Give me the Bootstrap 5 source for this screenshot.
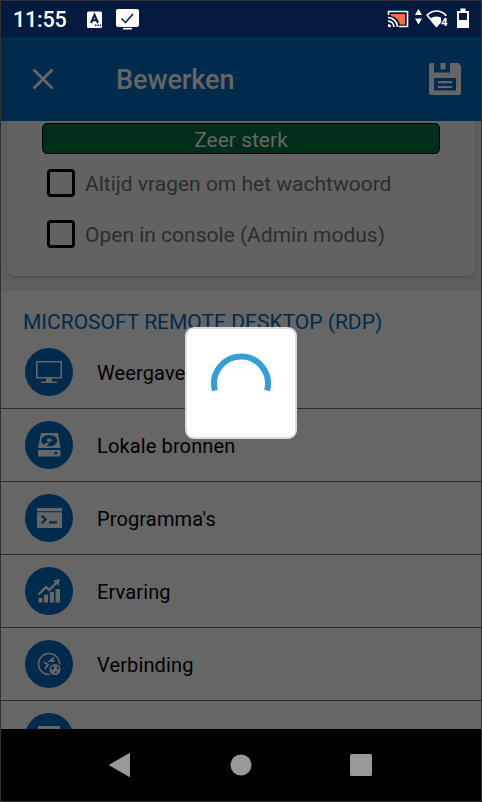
<!DOCTYPE html>
<html lang="nl">
<head>
<meta charset="utf-8">
<meta name="viewport" content="width=device-width, initial-scale=1">
<title>Bewerken</title>
<link href="https://cdn.jsdelivr.net/npm/bootstrap@5.3.0/dist/css/bootstrap.min.css" rel="stylesheet">
<style>
body{font-family:Roboto,sans-serif;background:#333;overflow:hidden}
.screen{width:482px;height:802px;border:1px solid #333;background:#666;font-size:20px;line-height:24px}
.screen svg{display:block;flex:none}
.statusbar{height:36px;background:#041b3f;padding:0 11px 0 12px}
.clock{font-size:21.5px;font-weight:500;width:74px;letter-spacing:-.2px;padding-top:2px}
.appbar{height:84px;background:#002b4d;color:#666;padding:0 20px 0 31px}
.appbar h1{font-size:27px;font-weight:500;margin:1px 0 0 62px;line-height:30px;letter-spacing:-.05px}
.content{height:608px;overflow:hidden}
.panel-area{height:170px;background:#5e5e5e;padding:0 6px}
.panel{height:155px;background:#626262;border-radius:0 0 8px 8px;box-shadow:0 1px 3px rgba(0,0,0,.22);padding:2px 35px 0}
.strength{height:31px;background:#002e18;border:1px solid #000;border-radius:5px;color:#666;font-size:21px;line-height:32px}
.opt{height:51px;color:#2d2d2d;padding-left:5px;font-size:21px}
.opt .form-check-input{width:28px;height:28px;border:3px solid #000;border-radius:4px;background:transparent;margin:0 10px 2px 0;flex:none}
.opts{padding-top:4px}
.section-title{font-size:21px;color:#002b4d;margin:0;padding:19px 0 2px 22px;line-height:24px;font-weight:400}
.entry{height:73px;border-bottom:1px solid #292929;padding-left:24px;color:#000}
.entry-label{padding-top:2px;letter-spacing:.13px}
.disc{width:48px;height:48px;border-radius:50%;background:#002b4d;margin-right:24px;flex:none}
.loader{width:112px;height:112px;left:184px;top:326px;background:#fff;border:2px solid #dcdcdc;border-radius:9px}
.sysnav{height:72px;background:#000}
</style>
</head>
<body>
<div class="screen d-flex flex-column position-relative">
  <div class="statusbar d-flex align-items-center text-white">
    <span class="clock">11:55</span>
    <svg width="60" height="36" viewBox="0 0 60 36">
      <rect y="10.500" width="15" height="16.500" rx="1.500" fill="#fff"/>
      <path d="M4 22 7.500 13.700 11 22M5.200 19.300h4.600" fill="none" stroke="#041b3f" stroke-width="2"/>
      <path d="M8 24.300h1.500M10.500 24.300H12M13 24.300h1" stroke="#041b3f" stroke-width="1.500"/>
      <rect x="29" y="8" width="23" height="18" rx="2" fill="#fff"/><path d="M36 27.700h9" stroke="#fff" stroke-width="1.600"/>
      <path d="M34.500 17.500l4 4 7.500-8.500" fill="none" stroke="#041b3f" stroke-width="1.500"/>
    </svg>
    <svg class="ms-auto" width="84" height="36" viewBox="386 1 84 36">
      <path d="M388.500 15v-3.500h19v15h-8.500" fill="none" stroke="#fff" stroke-width="1.600"/>
      <path d="M391 14h14v10.500H400C399 20 396 17 391 16z" fill="#ff6b43"/>
      <path d="M388 17.500a9.500 9.500 0 0 1 9.500 9.500M388 21a6 6 0 0 1 6 6" fill="none" stroke="#fff" stroke-width="1.700"/><path d="M388 24a3 3 0 0 1 3 3h-3z" fill="#fff"/>
      <path d="M415 15h7l-3.500-6zM415 18.500h7l-3.500 6z" fill="#fff"/>
      <path d="M427 15Q436.500 7 446 15L436.500 26.500z" fill="none" stroke="#fff" stroke-width="1.600" stroke-linejoin="round"/>
      <path d="M430 18.500q6.500-4 13 0L436.500 27z" fill="#fff"/>
      <rect x="441" y="16" width="7" height="10" fill="#041b3f"/>
      <text x="441" y="25.500" font-family="Roboto" font-weight="700" font-size="11.500" fill="#fff" textLength="6">4</text>
      <path d="M457 11h3.500V8.500h5V11h3.500v17h-12z" fill="#fff"/><path d="M459 13h8v7h-8z" fill="#041b3f"/>
    </svg>
  </div>
  <header class="appbar d-flex align-items-center">
    <svg width="22" height="22" viewBox="0 0 22 22"><path d="M1.500 1.500l19 19M20.500 1.500l-19 19" stroke="#666" stroke-width="2.700"/></svg>
    <h1>Bewerken</h1>
    <svg class="ms-auto" width="32" height="32" viewBox="0 0 32 32">
      <path fill="#666" fill-rule="evenodd" d="M2 0h3v9.500h16V0h8.500L32 3v27q0 2-2 2H2q-2 0-2-2V2q0-2 2-2zM5 15v12.500h22V15z"/>
      <path d="M11.500 0h5v6.500h-5z" fill="#666"/><path d="M9 19.200h14M9 24h14" stroke="#666" stroke-width="2.200"/>
    </svg>
  </header>
  <main class="content">
    <div class="panel-area">
      <div class="panel">
        <div class="strength text-center">Zeer sterk</div>
        <div class="opts">
          <label class="opt d-flex align-items-center"><input class="form-check-input" type="checkbox"><span>Altijd vragen om het wachtwoord</span></label>
          <label class="opt d-flex align-items-center"><input class="form-check-input" type="checkbox"><span>Open in console (Admin modus)</span></label>
        </div>
      </div>
    </div>
    <h2 class="section-title">MICROSOFT REMOTE DESKTOP (RDP)</h2>
    <div>
      <div class="entry d-flex align-items-center"><span class="disc"><svg width="48" height="48" viewBox="0 0 48 48"><path d="M11.750 13.750h24.500v16h-24.500z" fill="none" stroke="#666" stroke-width="1.500"/><path d="M21 30h6v3.500h5V35H16v-1.500h5z" fill="#666"/></svg></span><span class="entry-label">Weergave</span></div>
      <div class="entry d-flex align-items-center"><span class="disc"><svg width="48" height="48" viewBox="0 0 48 48"><path d="M16 12h17l2.500 15h-22.500zM13 29h22.500v6.500H13z" fill="#666"/><ellipse cx="24.200" cy="19.600" rx="8" ry="5.700" fill="#002b4d"/><ellipse cx="24.200" cy="19.300" rx="2.700" ry="1.800" fill="#666"/><path d="M20 22.500l3.500-1 .5 1.500-3.500 2.500-2.500-.5z" fill="#666"/><circle cx="30.800" cy="32" r="1.500" fill="#002b4d"/></svg></span><span class="entry-label">Lokale bronnen</span></div>
      <div class="entry d-flex align-items-center"><span class="disc"><svg width="48" height="48" viewBox="0 0 48 48"><path d="M12 14h25v3.200H12zM12 18.300h25V34H12z" fill="#666"/><path d="M16.500 21.500l4.200 4-4.200 4M24 28.300h8" fill="none" stroke="#002b4d" stroke-width="2.200"/></svg></span><span class="entry-label">Programma's</span></div>
      <div class="entry d-flex align-items-center"><span class="disc"><svg width="48" height="48" viewBox="0 0 48 48"><path d="M13.500 31h4v4.500h-4zM19 27.500h4v8h-4zM24.800 25h4.200v10.500h-4.200zM30.500 22H35v13.500h-4.500z" fill="#666"/><path d="M13.500 27.500l7.500-7.300 3.200 2.800 7.500-7.500" fill="none" stroke="#666" stroke-width="2.400"/><path d="M28 13.500l6.800-1.500-1.300 7z" fill="#666"/></svg></span><span class="entry-label">Ervaring</span></div>
      <div class="entry d-flex align-items-center"><span class="disc"><svg width="48" height="48" viewBox="0 0 48 48"><circle cx="24" cy="24" r="10.500" fill="none" stroke="#666" stroke-width="1.500"/><path d="M19 22l4 2.500-3 4.500" fill="none" stroke="#666" stroke-width="1.900"/><path d="M29 17.500l-4 3.500h4.500" fill="none" stroke="#666" stroke-width="1.900"/><circle cx="30" cy="29.500" r="6.700" fill="#002b4d"/><circle cx="30" cy="29.500" r="5.500" fill="#666"/><path d="M26 27l2-1 1.500 1.500-1.500 2.500-1.500-1zM32.500 26l1.500 2-1.200 2-1-2zM29.500 32l2-1 .3 1.500-1.500 1z" fill="#002b4d"/></svg></span><span class="entry-label">Verbinding</span></div>
      <div class="entry d-flex align-items-center"><span class="disc"><svg width="48" height="48" viewBox="0 0 48 48"><path d="M13 13h22v16H13z" fill="#666"/></svg></span></div>
    </div>
  </main>
  <nav class="sysnav d-flex">
    <svg width="480" height="72" viewBox="0 0 480 72" fill="#999"><path d="M108.500 36L128.500 24.500v23z" stroke="#999" stroke-linejoin="round"/><circle cx="240" cy="36" r="10.500"/><rect x="349" y="25" width="22" height="22" rx="1.500"/></svg>
  </nav>
  <div class="loader position-absolute" role="status" aria-label="Laden"><svg width="108" height="108" viewBox="187 329 108 108"><path d="M214.900 390.500a27 27 0 1 1 52.200 0" fill="none" stroke="#349fd7" stroke-width="6"/></svg></div>
</div>
<script src="https://cdn.jsdelivr.net/npm/bootstrap@5.3.0/dist/js/bootstrap.bundle.min.js"></script>
</body>
</html>
